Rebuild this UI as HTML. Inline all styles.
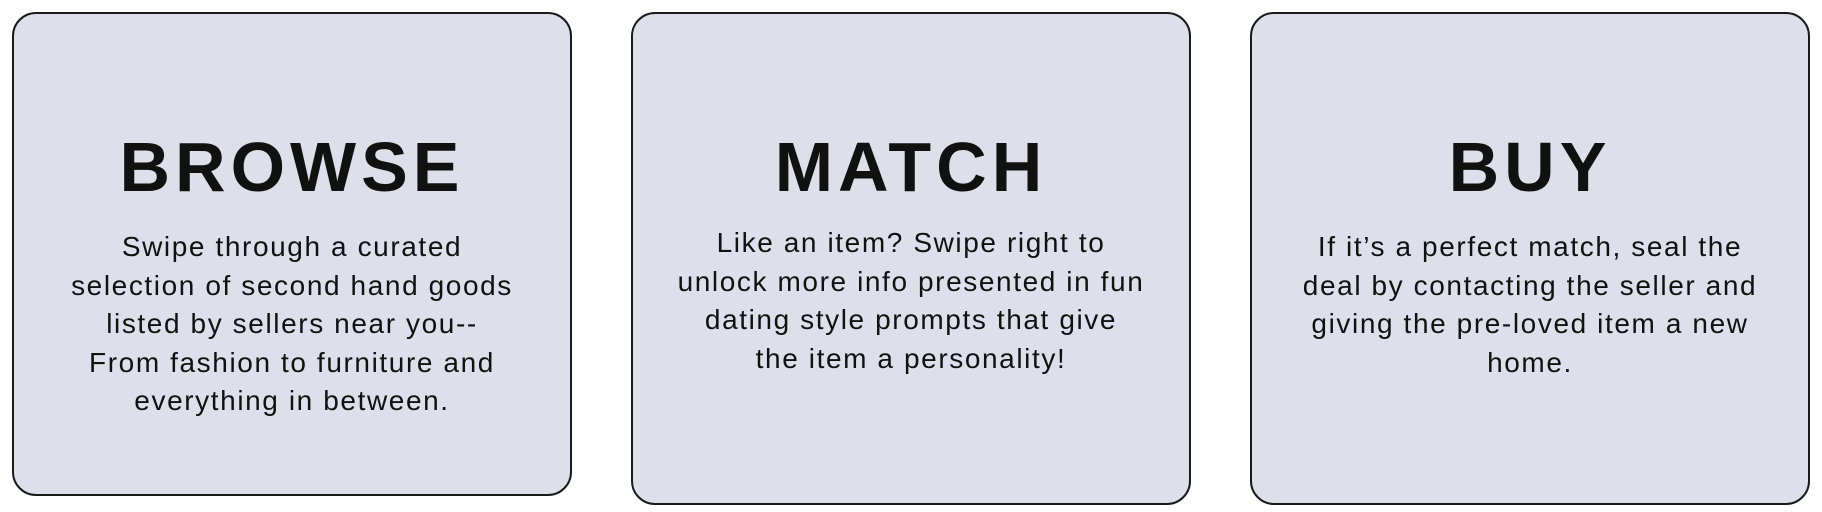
<!DOCTYPE html>
<html><head><style>
body{margin:0;width:1822px;height:512px;background:#fff;position:relative;overflow:hidden;font-family:"Liberation Sans",sans-serif;color:#111}
.c{position:absolute;top:12px;width:560px;background:#dde0ea;border:2px solid #1a1a1a;border-radius:24px;box-sizing:border-box;text-align:center}
.t{position:absolute;left:0;right:0;top:108px;font-size:70px;font-weight:bold;letter-spacing:5px;line-height:90px}
.b{position:absolute;left:-20px;right:-20px;font-size:28px;line-height:38.5px;letter-spacing:1.6px}
</style></head><body>
<div class="c" style="left:12px;height:484px"><div class="t">BROWSE</div><div class="b" style="top:214px">Swipe through a curated<br>selection of second hand goods<br>listed by sellers near you--<br>From fashion to furniture and<br>everything in between.</div></div>
<div class="c" style="left:631px;height:493px"><div class="t">MATCH</div><div class="b" style="top:210px">Like an item? Swipe right to<br>unlock more info presented in fun<br>dating style prompts that give<br>the item a personality!</div></div>
<div class="c" style="left:1250px;height:493px"><div class="t">BUY</div><div class="b" style="top:214px">If it’s a perfect match, seal the<br>deal by contacting the seller and<br>giving the pre-loved item a new<br>home.</div></div>
</body></html>
